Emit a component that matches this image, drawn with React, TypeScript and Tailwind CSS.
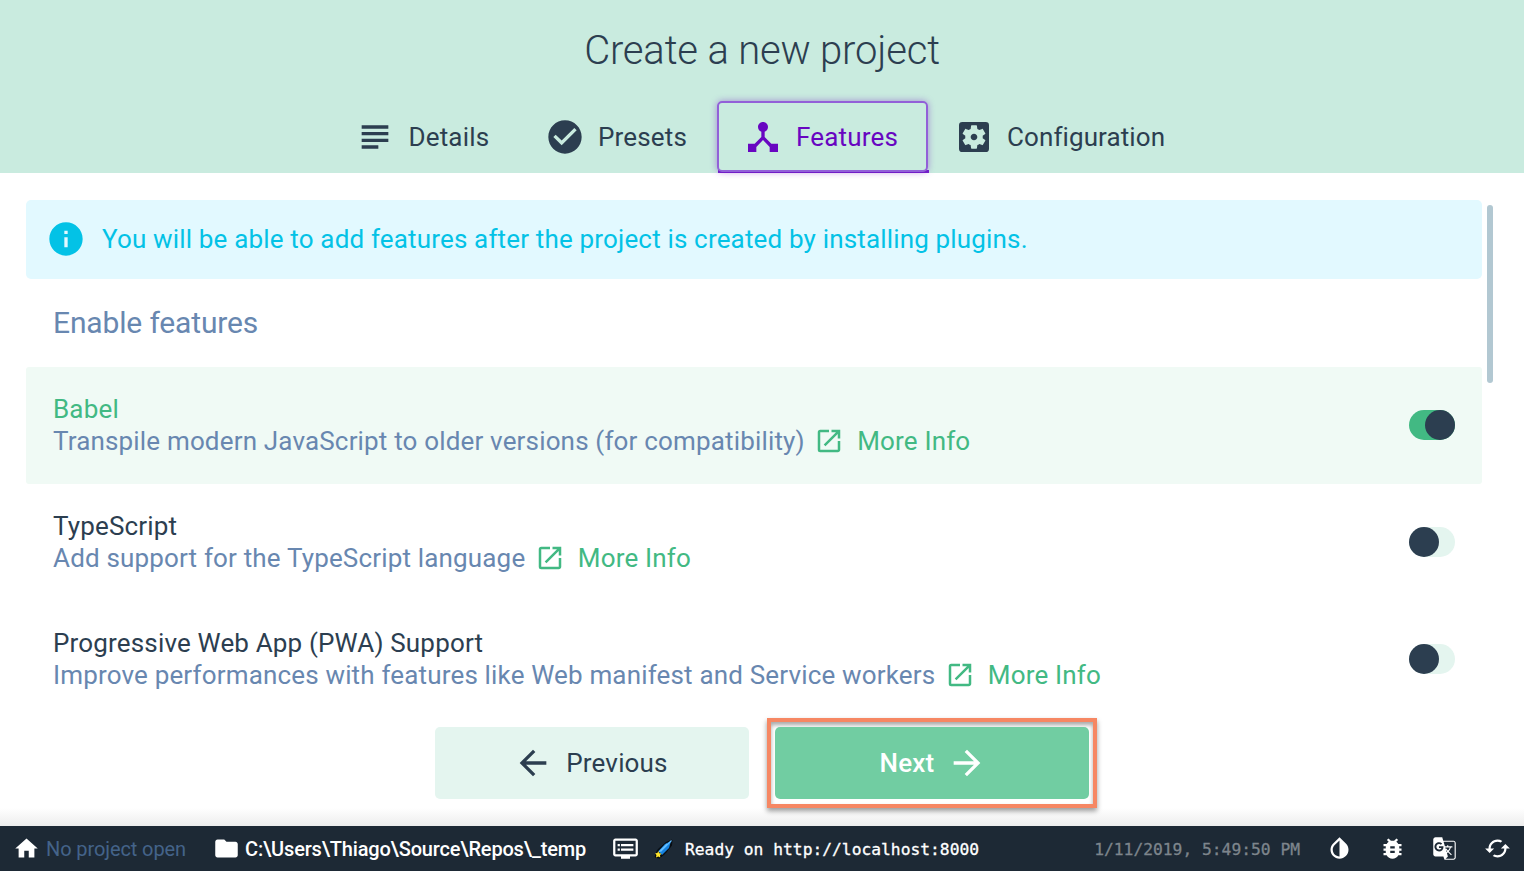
import type { ReactNode } from 'react';
import {
  MdArrowBack, MdArrowForward, MdBugReport, MdCached, MdCheckCircle, MdDeviceHub, MdDvr,
  MdFolder, MdInfo, MdInvertColors, MdOpenInNew, MdSettingsApplications, MdSubject,
} from 'react-icons/md';

function Tab({ icon, label, className, active }: { icon: ReactNode; label: string; className: string; active?: boolean }) {
  return (
    <div className={`relative flex h-[72px] items-center ${className}`}>
      {icon}
      <span>{label}</span>
      {active && (
        <>
          <div className="absolute -right-px bottom-0 left-px h-[3px] bg-[#7422c9]" />
          <div className="absolute inset-x-0 bottom-px top-0 rounded-[5px] border-2 border-[#9260d8] shadow-[0_0_7px_rgba(104,6,193,0.4)]" />
        </>
      )}
    </div>
  );
}

function Toggle({ on }: { on?: boolean }) {
  return (
    <div className={`flex h-[30px] w-[46px] rounded-full ${on ? 'justify-end bg-[#42b983]' : 'bg-[#e4f5ef]'}`}>
      <div className="size-[30px] rounded-full bg-[#2c3e50]" />
    </div>
  );
}

function Feature({ title, text, on }: { title: string; text: string; on?: boolean }) {
  return (
    <div className={`flex h-[117px] items-center justify-between px-[27px] pb-[2px] ${on ? 'rounded-[3px] bg-[#f0faf5]' : ''}`}>
      <div className="leading-[32px]">
        <div className={on ? 'text-[#42b983]' : 'text-[#2c3e50]'}>{title}</div>
        <div className="flex items-center text-[#6887b0]">
          <span>{text}</span>
          <MdOpenInNew className="ml-[9.5px] mr-[13px] size-[30px] text-[#42b983]" />
          <span className="text-[#42b983]">More Info</span>
        </div>
      </div>
      <Toggle on={on} />
    </div>
  );
}

function Translate() {
  return (
    <svg viewBox="0 0 24 24" className="size-[27px] fill-current">
      <path d="M20,5h-9.12L10,2H4C2.900,2,2,2.900,2,4v13c0,1.100,0.900,2,2,2h7l1,3h8c1.100,0,2-0.900,2-2V7C22,5.900,21.100,5,20,5z M7.170,14.590c-2.250,0-4.090-1.830-4.090-4.090s1.830-4.090,4.090-4.090c1.040,0,1.990,0.370,2.740,1.070l0.070,0.060l-1.230,1.180L8.690,8.670C8.400,8.400,7.910,8.080,7.170,8.080c-1.310,0-2.370,1.090-2.370,2.420s1.070,2.420,2.370,2.420c1.370,0,1.960-0.870,2.120-1.460H7.080V9.910h3.950l0.010,0.070c0.040,0.210,0.050,0.400,0.050,0.610C11.090,12.940,9.480,14.590,7.170,14.590z M13.200,12.880c0.330,0.600,0.740,1.180,1.190,1.700l-0.540,0.530L13.200,12.880z M13.970,12.120h-0.990l-0.310-1.040h3.990c0,0-0.340,1.310-1.560,2.740C14.580,13.210,14.210,12.600,13.970,12.120z M21,20c0,0.550-0.450,1-1,1h-7l2-2l-0.810-2.770l0.920-0.920L17.790,18l0.730-0.730l-2.710-2.680c0.900-1.030,1.600-2.250,1.920-3.510H19v-1.040h-3.640V9h-1.040v1.040h-1.960L11.180,6H20c0.550,0,1,0.450,1,1V20z" />
    </svg>
  );
}

function Comet() {
  return (
    <svg viewBox="0 0 20 20" className="size-5">
      <path d="M18 1 12 3.500 3.500 11 1 18l4.500 1.200L11.500 14l6-7.500z" fill="#080c10" stroke="#080c10" strokeLinejoin="round" />
      <path d="M17 2 11 5 4.500 12l3.500 4 7-7z" fill="#1682df" />
      <path d="m17.500 1.500-11 11M13 5l-8 8" stroke="#62bdff" strokeWidth="1.200" />
      <path d="m4.200 12 1 2.200 2.300.3-1.500 1.700.3 2.300-2.100-1-2.200 1 .4-2.400-1.200-1.800 2.200-.2z" fill="#ffe52c" />
    </svg>
  );
}

export default function App() {
  return (
    <div className="flex h-[871px] w-[1524px] flex-col overflow-hidden bg-white font-['Roboto',sans-serif] text-[26px] tracking-[0.165px] text-[#2c3e50]">
      <header className="flex h-[173px] shrink-0 flex-col items-center bg-[#c9ebdf]">
        <h1 className="flex h-[101px] items-center text-[40px] font-light tracking-[-0.18px]">Create a new project</h1>
        <nav className="flex">
          <Tab className="w-[189px] gap-[13.5px] pl-[26px]" label="Details" icon={<MdSubject className="size-10" />} />
          <Tab className="w-[199px] gap-[13px] pl-[27px]" label="Presets" icon={<MdCheckCircle className="size-10" />} />
          <Tab active className="w-[211px] gap-[13px] pl-[26px] text-[#6806c1]" label="Features" icon={<MdDeviceHub className="size-10" />} />
          <Tab className="w-[267px] gap-[13px] pl-[26px] tracking-[0.1px]" label="Configuration" icon={<MdSettingsApplications className="size-10" />} />
        </nav>
      </header>
      <main className="flex h-[527px] shrink-0 justify-between overflow-hidden pl-[26px] pr-[31px] pt-[27px]">
        <div className="w-[1456px]">
          <div className="flex h-[79px] items-center gap-[16px] rounded-[5px] bg-[#e2f9ff] pl-5 text-[#03c2e6]">
            <MdInfo className="mb-px size-10" />
            <span>You will be able to add features after the project is created by installing plugins.</span>
          </div>
          <h2 className="flex h-[88px] items-center pb-[2px] pl-[27px] text-[30px] tracking-[-0.15px] text-[#6887b0]">Enable features</h2>
          <Feature on title="Babel" text="Transpile modern JavaScript to older versions (for compatibility)" />
          <Feature title="TypeScript" text="Add support for the TypeScript language" />
          <Feature title="Progressive Web App (PWA) Support" text="Improve performances with features like Web manifest and Service workers" />
        </div>
        <div className="mt-[5px] h-[178px] w-[6px] rounded-full bg-[#b2c8d2]" />
      </main>
      <div className="flex h-[126px] shrink-0 bg-[linear-gradient(to_bottom,#fff_108px,#ededed_126px)] pl-[435px] pt-[18px]">
        <button className="mt-[9px] flex h-[72px] w-[314px] items-center justify-center gap-[13px] rounded-[5px] bg-[#e4f5ef] pr-[3px]">
          <MdArrowBack className="size-10" />
          <span>Previous</span>
        </button>
        <div className="ml-[18px] h-[90px] w-[330px] border-4 border-[#f68763] bg-white p-1 pt-[5px] shadow-[0_3px_5px_rgba(0,0,0,0.4),inset_0_3px_4px_rgba(0,0,0,0.35)]">
          <button className="flex h-[72px] w-full items-center justify-center gap-[13px] rounded-[5px] bg-[#71cda2] pl-[3px] font-medium text-white">
            <span>Next</span>
            <MdArrowForward className="size-10" />
          </button>
        </div>
      </div>
      <footer className="flex h-[45px] shrink-0 items-center bg-[#1d2935] px-[13px] text-[20px] tracking-[0px] text-white">
        <svg viewBox="0 0 24 24" className="mr-[6px] size-[27px] fill-current"><path d="M10 20v-6h4v6h5v-8h3L12 3 2 12h3v8z" /></svg>
        <span className="w-[167px] tracking-[-0.1px] text-[#446389]">No project open</span>
        <MdFolder className="mr-[5px] size-[27px]" />
        <span className="w-[367px] font-medium tracking-[-0.18px]">C:\Users\Thiago\Source\Repos\_temp</span>
        <MdDvr className="mr-[15px] size-[27px]" />
        <Comet />
        <span className="ml-[11px] pt-[3px] font-['DejaVu_Sans_Mono',monospace] text-[16.3px] [-webkit-text-stroke:0.3px_currentColor]">Ready on http://localhost:8000</span>
        <div className="ml-auto flex items-center">
          <span className="mr-[26px] pt-[3px] font-['DejaVu_Sans_Mono',monospace] text-[16.3px] text-[#7d858c] [-webkit-text-stroke:0.3px_currentColor]">1/11/2019, 5:49:50 PM</span>
          <div className="flex gap-[25.67px]">
            <MdInvertColors className="size-[27px]" />
            <MdBugReport className="size-[27px]" />
            <Translate />
            <MdCached className="size-[27px]" />
          </div>
        </div>
      </footer>
    </div>
  );
}
